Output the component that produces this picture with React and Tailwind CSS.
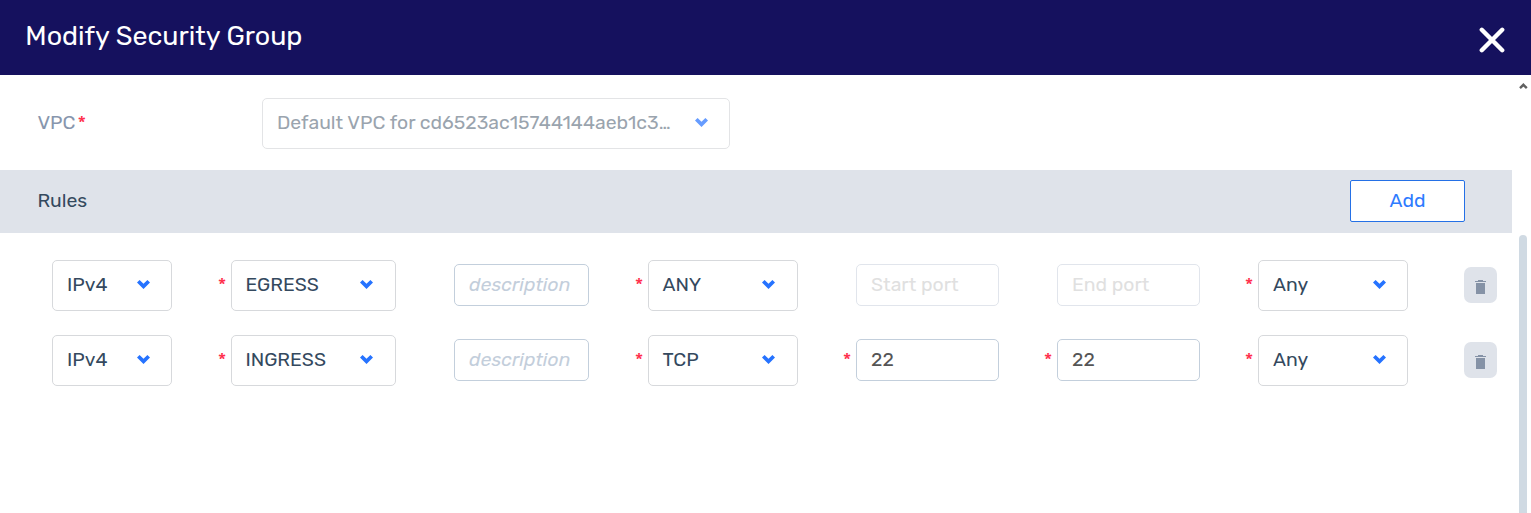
function Chevron({ faded }) {
  return (
    <svg width="13" height="9" viewBox="0 0 13 9" className={faded ? "mb-px shrink-0 opacity-70" : "mb-px shrink-0"}>
      <path d="M0 2.6 L2.6 0 L6.5 3.7 L10.4 0 L13 2.6 L6.5 9 Z" fill="#2673ff" />
    </svg>
  );
}

function Select({ value, width, pad = "pr-[21px] pl-[14px]" }) {
  return (
    <button className={`flex h-[51px] items-center justify-between rounded-[5px] border border-[#d7d9dc] bg-white pb-px text-[#34495e] ${pad} ${width}`}>
      <span>{value}</span>
      <Chevron />
    </button>
  );
}

function Field({ children, width, look }) {
  return (
    <div className={`mb-px flex h-[42px] items-center rounded-[5px] border bg-white pl-[14px] ${width} ${look}`}>
      {children}
    </div>
  );
}

function Gap({ required, width }) {
  return (
    <div className={`flex shrink-0 justify-end pr-[4.5px] pb-px text-[#ff2d4a] ${width}`}>
      {required && <span>*</span>}
    </div>
  );
}

function Trash() {
  return (
    <button className="mb-px flex h-9 w-[33px] items-center justify-center rounded-[7px] bg-[#dfe3ea]">
      <svg width="11" height="14" viewBox="0 0 11 14" fill="#8592a6" className="mt-[4px]">
        <path d="M3 0h5v1h3v1H0V1h3z" />
        <path d="M1 3h9v11H1z" />
      </svg>
    </button>
  );
}

const rules = [
  { direction: "EGRESS", protocol: "ANY" },
  { direction: "INGRESS", protocol: "TCP", port: "22" },
];

function Port({ value, placeholder }) {
  return value ? (
    <Field width="w-[143px]" look="border-[#c3cfdc] text-[#555]">
      <span>{value}</span>
    </Field>
  ) : (
    <Field width="w-[143px]" look="border-[#e1e5ec] text-[#e0e0e0]">
      <span>{placeholder}</span>
    </Field>
  );
}

function Rule({ rule }) {
  return (
    <div className="flex h-[51px] items-center pl-[52px]">
      <Select value="IPv4" width="w-[120px]" />
      <Gap required width="w-[59px]" />
      <Select value={rule.direction} width="w-[165px]" pad="pr-[22px] pl-[13.4px]" />
      <Gap width="w-[58px]" />
      <Field width="w-[135px]" look="border-[#c3cfdc] text-[#c3cedb]">
        <span className="italic">description</span>
      </Field>
      <Gap required width="w-[59px]" />
      <Select value={rule.protocol} width="w-[150px]" pad="pr-[22px] pl-[13.4px]" />
      <Gap required={Boolean(rule.port)} width="w-[58px]" />
      <Port value={rule.port} placeholder="Start port" />
      <Gap required={Boolean(rule.port)} width="w-[58px]" />
      <Port value={rule.port} placeholder="End port" />
      <Gap required width="w-[58px]" />
      <Select value="Any" width="w-[150px]" />
      <Gap width="w-[56px]" />
      <Trash />
    </div>
  );
}

export default function App() {
  return (
    <div className="flex h-[513px] w-[1531px] flex-col overflow-hidden bg-white font-['Rubik','Roboto',sans-serif] text-[19.4px] leading-6">
      <header className="flex h-[75px] shrink-0 items-start justify-between bg-[#15115e] pr-[26px] pl-[25.3px]">
        <h1 className="mt-[20px] text-[26.9px] leading-8 whitespace-nowrap text-white">Modify Security Group</h1>
        <svg width="26" height="26" viewBox="0 0 26 26" className="mt-[27px]">
          <path d="M2.8 2.8 L23.2 23.2 M23.2 2.8 L2.8 23.2" stroke="#fff" strokeWidth="4.4" strokeLinecap="round" />
        </svg>
      </header>
      <div className="flex min-h-0 flex-1">
        <main className="w-[1512px]">
          <div className="flex h-[95px] items-start pt-[23px] pl-[37.4px]">
            <div className="flex w-[224.6px] items-center pt-[13px] text-[#8796ad]">
              <span>VPC</span>
              <span className="pl-[2px] text-[#ff2d4a]">*</span>
            </div>
            <button className="flex h-[51px] w-[468px] items-center justify-between rounded-[5px] border border-[#e3e4e6] pr-[21px] pb-px pl-[14px] text-[#9aa4ae]">
              <span className="whitespace-nowrap">Default VPC for cd6523ac15744144aeb1c3…</span>
              <Chevron faded />
            </button>
          </div>
          <div className="flex h-[63px] items-center justify-between bg-[#dfe3ea] pr-[47px] pb-px pl-[37.4px]">
            <h2 className="text-[#34495e]">Rules</h2>
            <button className="h-[42px] w-[115px] rounded-[2px] border border-[#2470e6] bg-white text-[#2e7bff]">Add</button>
          </div>
          <div className="flex flex-col gap-6 pt-[27px]">
            {rules.map((rule) => (
              <Rule key={rule.direction} rule={rule} />
            ))}
          </div>
        </main>
        <div className="flex w-[19px] flex-col items-start pl-[7px]">
          <svg width="9" height="8" viewBox="0 0 9 8" className="mt-[7px]">
            <path d="M1 6.2 L4.4 2.8 L7.8 6.2" fill="none" stroke="#606060" strokeWidth="2.4" />
          </svg>
          <div className="mt-[145px] w-2 flex-1 rounded-t bg-[#d0dae3]" />
        </div>
      </div>
    </div>
  );
}
